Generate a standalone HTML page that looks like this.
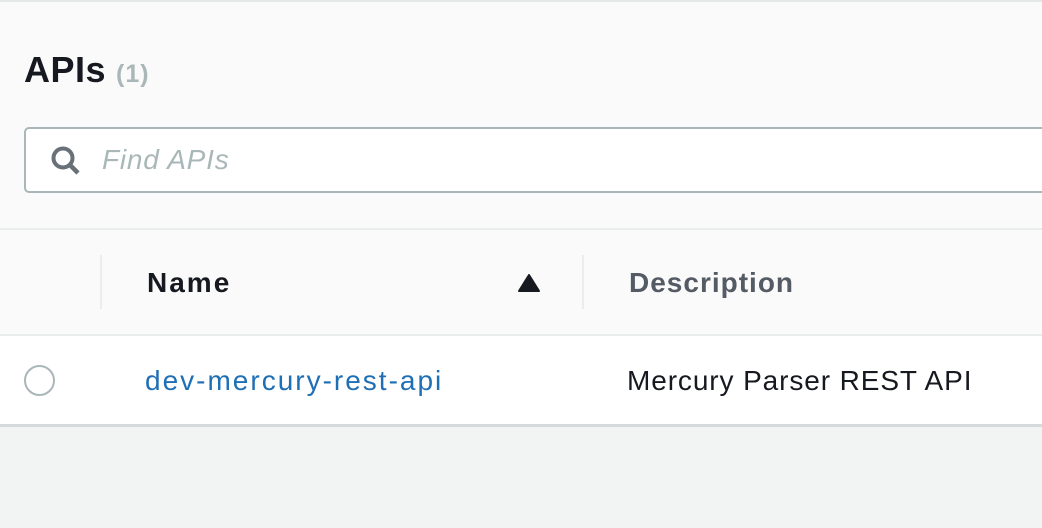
<!DOCTYPE html>
<html><head><style>
body{margin:0;width:1042px;height:528px;overflow:hidden;background:#f2f3f3;font-family:"Liberation Sans",sans-serif;position:relative}
.top{position:absolute;left:0;top:0;width:1042px;height:2px;background:#e5e8e8}
.hdr{position:absolute;left:0;top:2px;width:1042px;height:226px;background:#fafafa;border-bottom:2px solid #eaeded}
.title{position:absolute;left:24px;top:47px;font-size:36px;font-weight:bold;color:#16191f;letter-spacing:0.5px}
.title span{font-size:25px;color:#aab7b8;margin-left:10px;letter-spacing:1px}
.search{position:absolute;left:24px;top:127px;width:1040px;height:62px;border:2px solid #aab7b8;border-radius:5px;background:#fff}
.search .ph{position:absolute;left:76px;top:15px;font-size:28px;font-style:italic;color:#aab7b8;letter-spacing:0.8px}
.th{position:absolute;left:0;top:230px;width:1042px;height:104px;background:#fafafa;border-bottom:2px solid #eaeded}
.sep{position:absolute;top:25px;width:2px;height:54px;background:#eaeded}
.th .n{position:absolute;left:147px;top:37px;font-size:28px;font-weight:bold;color:#16191f;letter-spacing:2px}
.th .d{position:absolute;left:629px;top:37px;font-size:28px;font-weight:bold;color:#545b64;letter-spacing:1px}
.row{position:absolute;left:0;top:336px;width:1042px;height:88px;background:#fff;border-bottom:3px solid #d5dbdb}
.radio{position:absolute;left:24px;top:30px;width:27px;height:27px;border:2px solid #aab7b8;border-radius:50%;box-sizing:border-box;width:31px;height:31px;top:29px}
.link{position:absolute;left:145px;top:29px;font-size:28px;color:#1f6fb5;letter-spacing:2px}
.desc{position:absolute;left:627px;top:29px;font-size:28px;color:#16191f;letter-spacing:0.9px}
</style></head><body>
<div class="top"></div>
<div class="hdr">
<div class="title">APIs<span>(1)</span></div>
</div>
<div class="search">
<svg style="position:absolute;left:24px;top:16px" width="32" height="32" viewBox="0 0 32 32"><circle cx="13" cy="13" r="9.5" fill="none" stroke="#687078" stroke-width="4"/><line x1="20" y1="20" x2="28" y2="28" stroke="#687078" stroke-width="4.5"/></svg>
<div class="ph">Find APIs</div>
</div>
<div class="th">
<div class="sep" style="left:100px"></div>
<div class="n">Name</div>
<svg style="position:absolute;left:517px;top:43px" width="24" height="20" viewBox="0 0 24 20"><polygon points="12,2 22,18 2,18" fill="#16191f" stroke="#16191f" stroke-linejoin="round" stroke-width="2"/></svg>
<div class="sep" style="left:582px"></div>
<div class="d">Description</div>
</div>
<div class="row">
<div class="radio"></div>
<div class="link">dev-mercury-rest-api</div>
<div class="desc">Mercury Parser REST API</div>
</div>
</body></html>
